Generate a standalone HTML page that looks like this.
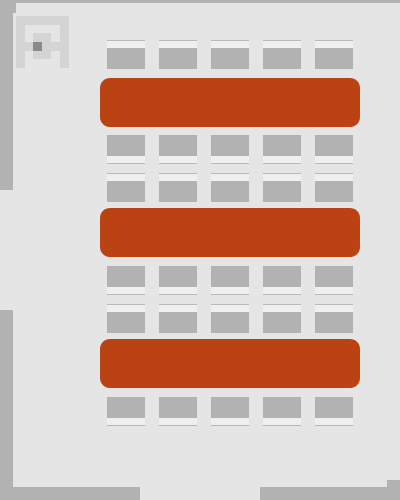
<!DOCTYPE html>
<html><head><style>
*{margin:0;padding:0;box-sizing:border-box}
body{width:400px;height:500px;background:#e5e5e5;position:relative;overflow:hidden}
div{position:absolute}
.g{background:#b2b2b2}
.t{background:#bb4213;border-radius:10px;left:100px;width:260px;height:49px}
.cd{width:38px;height:29px;border-top:1px solid #b8b8b8;background:#efefef}
.cd i{position:absolute;left:0;right:0;bottom:0;height:21px;background:#b2b2b2;display:block}
.cu{width:38px;height:29px;border-bottom:1px solid #b8b8b8;background:#efefef}
.cu i{position:absolute;left:0;right:0;top:0;height:21px;background:#b2b2b2;display:block}
.lc{background:#d4d4d4;width:9px;height:9px}
</style></head><body>
<div class="g" style="left:16px;top:0;width:384px;height:3px"></div>
<div class="g" style="left:0;top:0;width:16px;height:13px"></div>
<div class="g" style="left:0;top:0;width:13px;height:190px"></div>
<div class="g" style="left:0;top:310px;width:13px;height:190px"></div>
<div class="g" style="left:0;top:487px;width:140px;height:13px"></div>
<div class="g" style="left:260px;top:487px;width:140px;height:13px"></div>
<div class="g" style="left:387px;top:480px;width:13px;height:20px"></div>

<div class="lc" style="left:16px;top:16px;width:52px"></div>
<div class="lc" style="left:16px;top:16px;height:52px"></div>
<div class="lc" style="left:60px;top:16px;height:52px"></div>
<div class="lc" style="left:33px;top:33px;width:18px;height:26px"></div>
<div class="lc" style="left:16px;top:42px;width:52px"></div>
<div style="left:33px;top:42px;width:9px;height:9px;background:#8a8a8a"></div>

<div class="t" style="top:78px"></div>
<div class="t" style="top:208px"></div>
<div class="t" style="top:339px"></div>

<div id="c"></div>
<script>
var xs=[107,159,211,263,315],h='';
[[40,'cd'],[135,'cu'],[173,'cd'],[266,'cu'],[304,'cd'],[397,'cu']].forEach(function(r){
xs.forEach(function(x){h+='<div class="'+r[1]+'" style="left:'+x+'px;top:'+r[0]+'px"><i></i></div>';});});
document.body.insertAdjacentHTML('beforeend',h);
</script>
</body></html>
